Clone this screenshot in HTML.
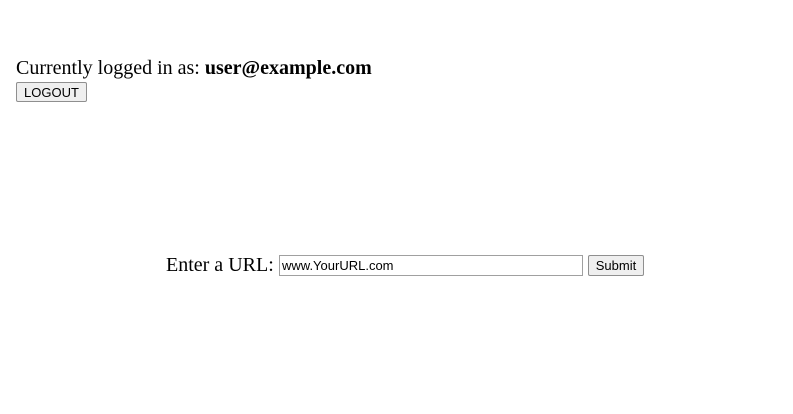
<!DOCTYPE html>
<html><head><style>
body{margin:0;width:793px;height:414px;background:#fff;font-family:"Liberation Serif",serif;position:relative;overflow:hidden}
.t{position:absolute;font-size:20px;line-height:23px;color:#000;white-space:nowrap}
button{position:absolute;font-family:"Liberation Sans",sans-serif;font-size:13px;background:#efefef;border:1px solid #8f8f8f;border-radius:2px;padding:0;color:#000;box-sizing:border-box}
input{position:absolute;box-sizing:border-box;font-family:"Liberation Sans",sans-serif;font-size:13px;border:1px solid #a0a0a0;padding:0 2px;margin:0;background:#fff;color:#000}
</style></head><body>
<div class="t" style="left:16px;top:57px">Currently logged in as: <b>user@example.com</b></div>
<button style="left:16px;top:82px;width:71px;height:20px">LOGOUT</button>
<div class="t" style="left:166px;top:254px">Enter a URL:</div>
<input style="left:279px;top:255px;width:304px;height:21px" value="www.YourURL.com">
<button style="left:588px;top:255px;width:56px;height:21px">Submit</button>
</body></html>
